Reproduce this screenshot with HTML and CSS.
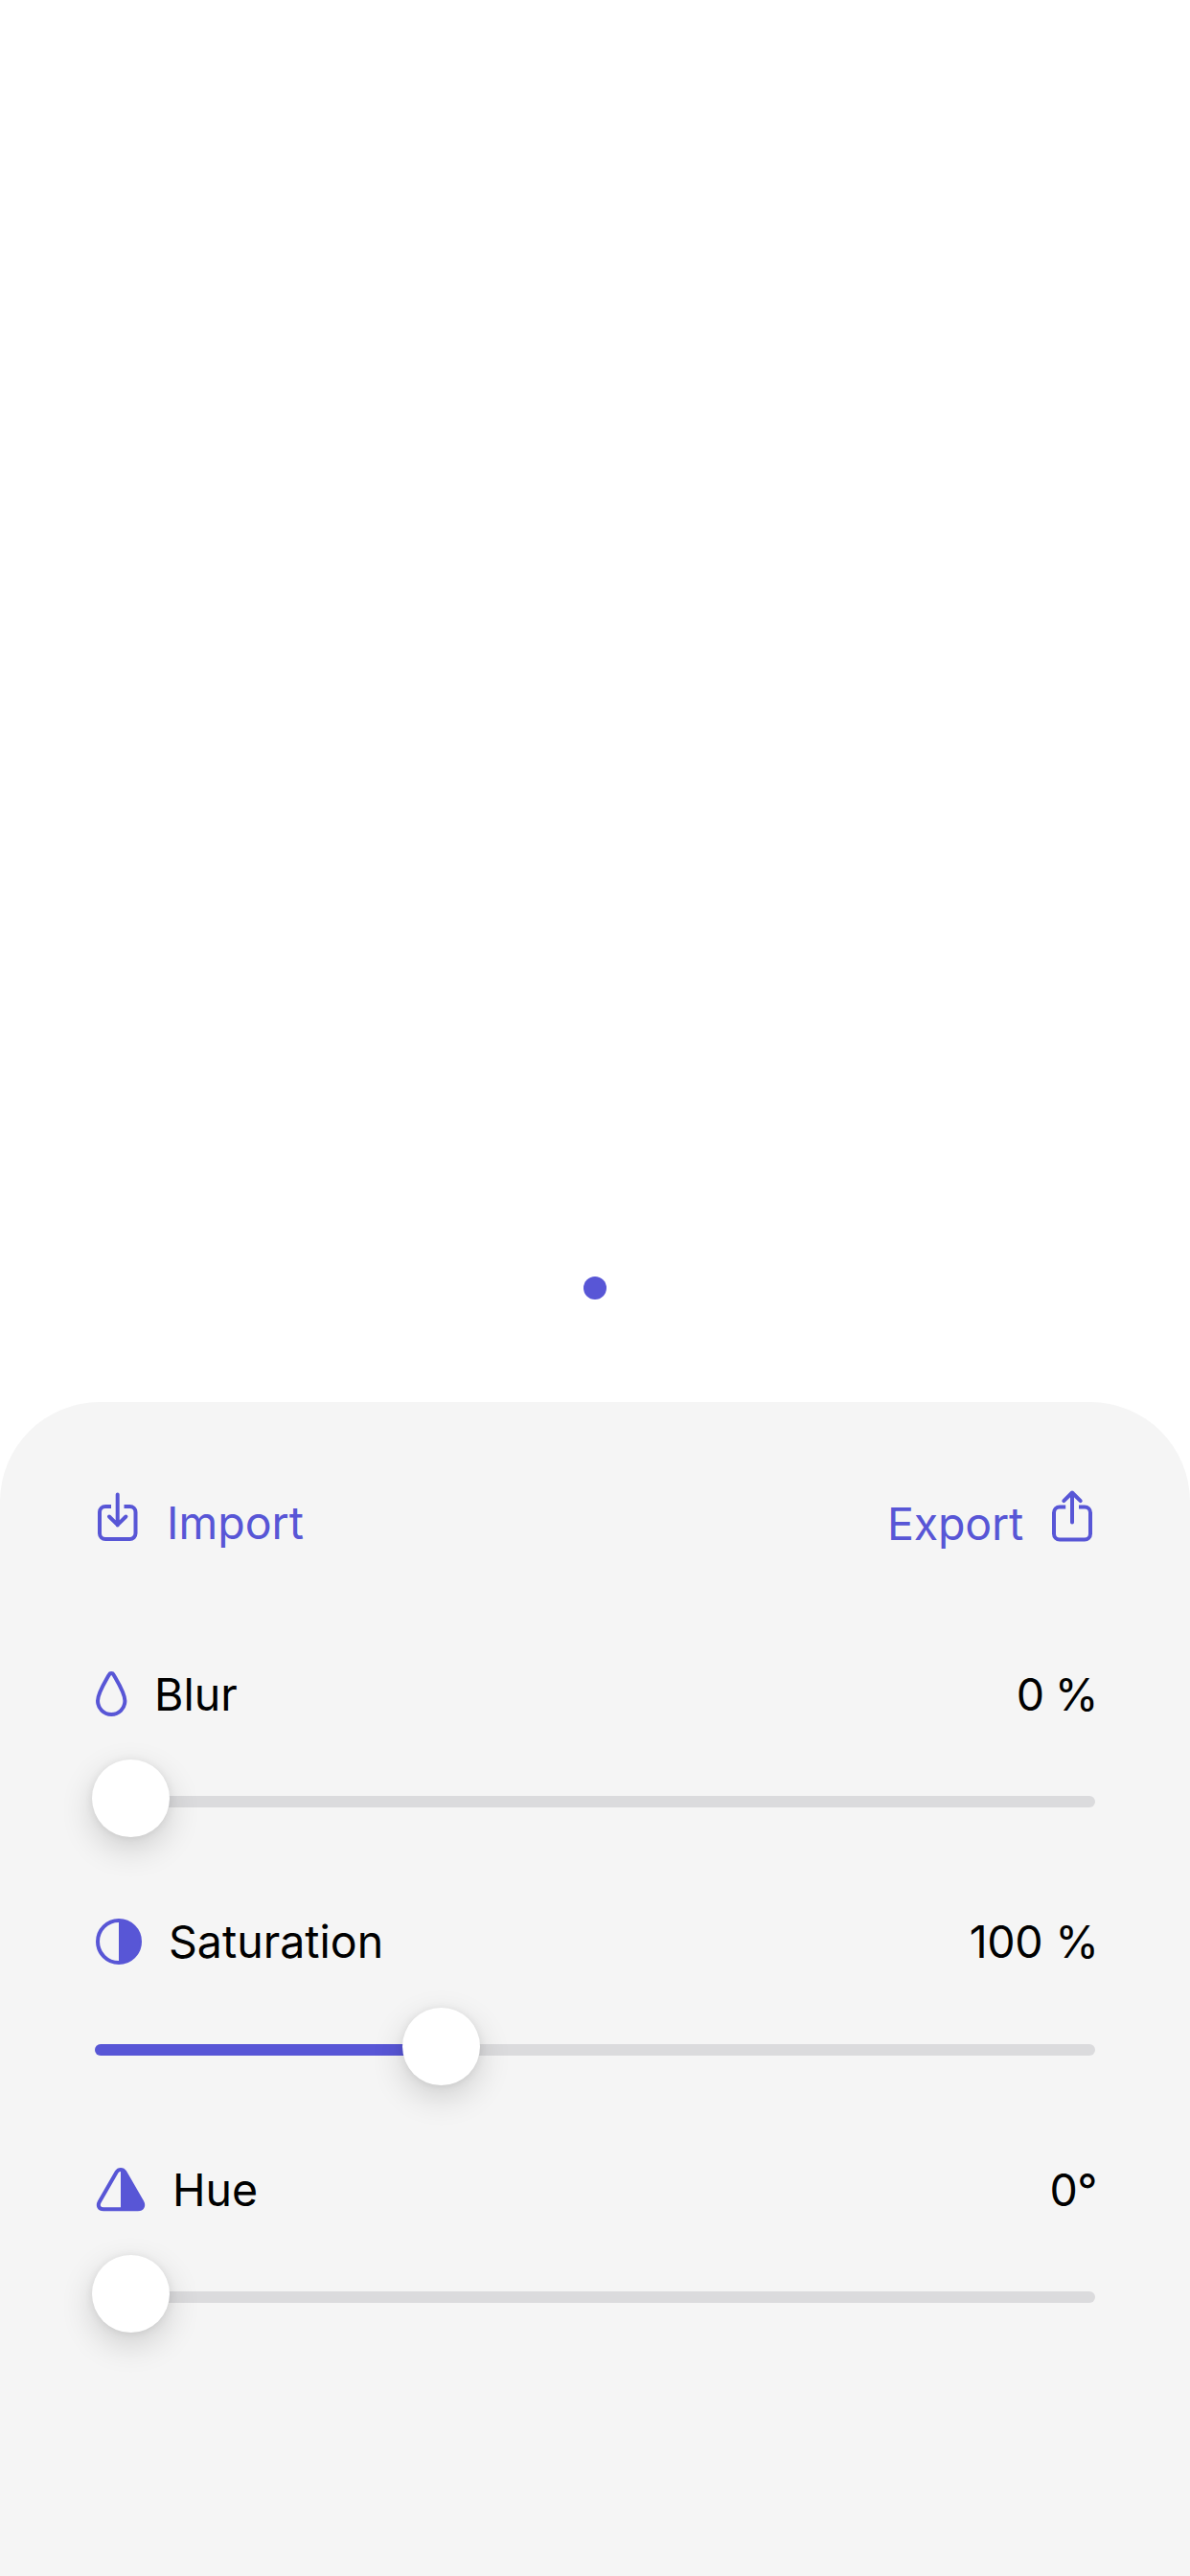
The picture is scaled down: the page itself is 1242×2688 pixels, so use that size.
FILE: index.html
```html
<!DOCTYPE html>
<html lang="en">
<head>
<meta charset="utf-8">
<title>Image adjustments</title>
<link rel="stylesheet" href="styles.css">
</head>
<body>
<main class="screen">
  <section class="preview"><span class="dot"></span></section>
  <section class="panel">
    <div class="actions">
      <a class="action">
        <svg class="icon-box icon-import" viewBox="0 0 44 56"><path d="M16 19H10a6 6 0 0 0-6 6v22a6 6 0 0 0 6 6h25.500a6 6 0 0 0 6-6V25a6 6 0 0 0-6-6h-6"/><path class="round" d="M22.700 6.500v32M14 29.500l8.700 8.700 8.700-8.700"/></svg>
        <span class="text import">Import</span>
      </a>
      <a class="action">
        <span class="text export">Export</span>
        <svg class="icon-box icon-export" viewBox="0 0 44 56"><path d="M14.200 19.500H8a6 6 0 0 0-6 6v22a6 6 0 0 0 6 6h26a6 6 0 0 0 6-6v-22a6 6 0 0 0-6-6h-6"/><path class="round" d="M21 35.500V5M12.300 13.200L21 4.500l8.700 8.700"/></svg>
      </a>
    </div>
    <div class="control">
      <div class="row">
        <svg class="icon-drop" viewBox="0 0 34 50"><path d="M13.900 4.500C8.500 14 2 24 2 31.800a14.200 14.200 0 0 0 28.400 0C30.400 24 24 14 18.500 4.500a2.600 2.600 0 0 0-4.600 0z"/></svg>
        <span class="text blur">Blur</span>
        <span class="text value v-blur">0 %</span>
      </div>
      <div class="slider"><div class="track"></div><div class="knob"></div></div>
    </div>
    <div class="control">
      <div class="row row-saturation">
        <svg class="icon-circle" viewBox="0 0 48 48"><circle cx="24" cy="24" r="22"/><path class="fill" d="M24 2a22 22 0 0 1 0 44z"/></svg>
        <span class="text saturation">Saturation</span>
        <span class="text value v-saturation">100 %</span>
      </div>
      <div class="slider"><div class="track"><div class="progress" style="width: 34.500%"></div></div><div class="knob" style="left: 321px"></div></div>
    </div>
    <div class="control">
      <div class="row">
        <svg class="icon-triangle" viewBox="0 0 50 46"><path d="M20.800 4.300L2.800 35.500C.5 39.800 2.500 43.200 7 43.200H43c4.500 0 6.500-3.400 4.200-7.700L29.200 4.300c-2-3.200-6.400-3.200-8.400 0z"/><path class="fill" d="M25 2c1.700 0 3.200.8 4.200 2.300l18 31.200c2.300 4.300.3 7.700-4.200 7.700H25z"/></svg>
        <span class="text hue">Hue</span>
        <span class="text value v-hue">0°</span>
      </div>
      <div class="slider"><div class="track"></div><div class="knob"></div></div>
    </div>
  </section>
</main>
</body>
</html>
```
FILE: styles.css
```css
* { box-sizing: border-box; }
body { margin: 0; background: #fff; font-family: Inter, "Liberation Sans", sans-serif; }
.screen { display: flex; flex-direction: column; width: 1242px; height: 2688px; }
.preview { height: 1463px; display: flex; justify-content: center; align-items: flex-end; padding-bottom: 107px; }
.dot { width: 24px; height: 24px; border-radius: 50%; background: #5856d6; }
.panel { flex: 1; background: #f5f5f5; border-radius: 104px 104px 0 0; padding: 90px 99px 0; }
svg { fill: none; stroke: #5856d6; stroke-width: 4; flex: none; display: block; overflow: visible; }
.round { stroke-linecap: round; stroke-linejoin: round; }
.fill { fill: #5856d6; stroke: none; }
.text { font-size: 46.500px; line-height: 60px; white-space: nowrap; color: #000; }
.actions { display: flex; justify-content: space-between; height: 60px; margin-bottom: 125px; }
.action { display: flex; align-items: flex-start; }
.action .text { color: #5856d6; margin-top: 6px; }
.icon-box { width: 44px; height: 56px; }
.icon-import { margin-left: 1px; }
.icon-export { margin: 0 1px 0 0; }
.control { display: flow-root; height: 259px; }
.control + .control { height: 258px; }
.row { display: flex; align-items: center; height: 60px; }
.row-saturation { margin: -1px 0 39px; }
.row-saturation + .slider { margin-top: 0; }
.value { margin-left: auto; }
.v-blur { letter-spacing: -1.300px; margin-right: -2px; }
.v-saturation { letter-spacing: -0.300px; margin-right: -3.500px; }
.v-hue { letter-spacing: -0.500px; margin-right: -2px; }
.icon-drop { width: 34px; height: 50px; margin-left: 1px; }
.icon-circle { width: 48px; height: 48px; margin-left: 1px; }
.icon-triangle { width: 50px; height: 46px; margin-left: 2px; }
.import { margin-left: 30px; }
.action .export { margin: 7px 30px 0 0; letter-spacing: -0.200px; }
.blur { margin-left: 27px; }
.saturation { margin-left: 28px; }
.hue { margin-left: 29px; }
.slider { position: relative; height: 81px; margin-top: 38px; padding-top: 38px; }
.track { height: 12px; border-radius: 6px; background: #dbdbdd; overflow: hidden; }
.progress { height: 12px; background: #5856d6; }
.knob { position: absolute; left: -3px; top: 0; width: 81px; height: 81px; border-radius: 50%; background: #fff; box-shadow: 0 12px 34px rgba(0,0,0,.16), 0 1px 10px rgba(0,0,0,.08); }
```
